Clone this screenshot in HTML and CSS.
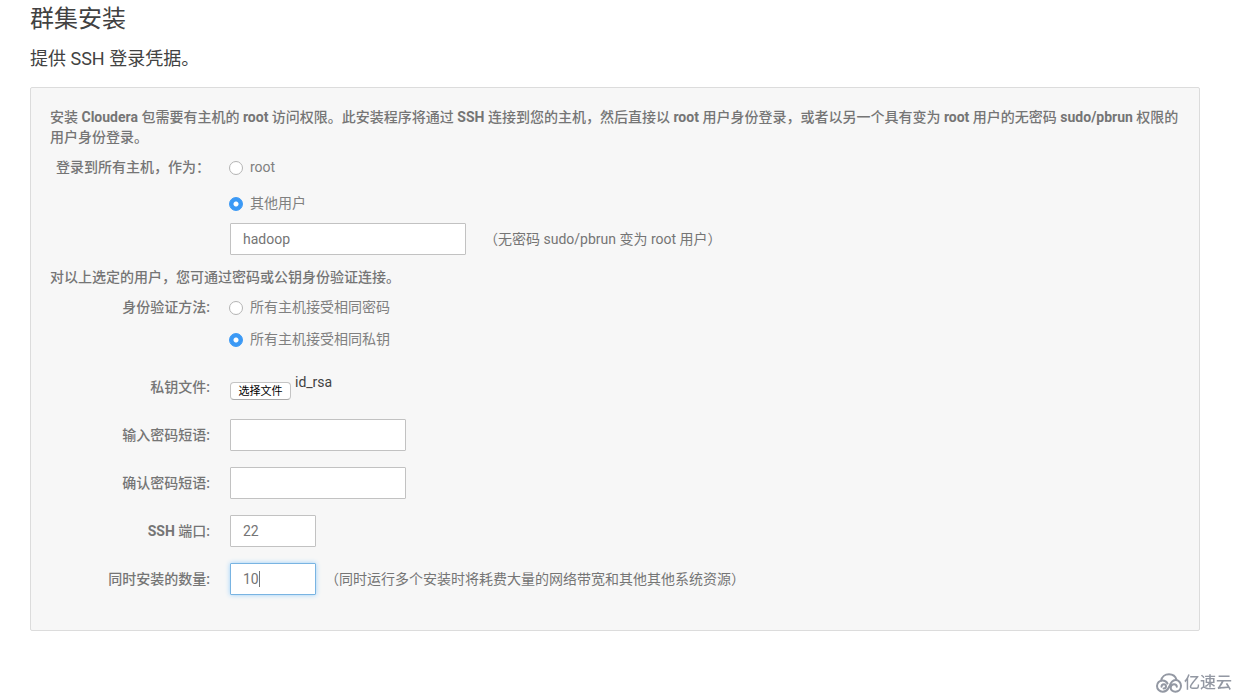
FILE: index.html
```html
<!DOCTYPE html>
<html lang="zh-CN">
<head>
<meta charset="utf-8">
<title>群集安装</title>
<link rel="stylesheet" href="styles.css">
</head>
<body>
<main class="page">
  <h1 class="title">群集安装</h1>
  <h2 class="subtitle">提供 SSH 登录凭据。</h2>
  <form class="panel">
    <p class="note">安装 <b>Cloudera</b> 包需要有主机的 <b>root</b> 访问权限。此安装程序将通过 <b>SSH</b> 连接到您的主机，然后直接以 <b>root</b> 用户身份登录，或者以另一个具有变为 <b>root</b> 用户的无密码 <b>sudo/pbrun</b> 权限的用户身份登录。</p>
    <div class="row row-choice" role="radiogroup" aria-labelledby="login-label">
      <span class="label" id="login-label">登录到所有主机，作为：</span>
      <div class="choices choices-wide">
        <label class="choice"><input class="radio" type="radio" name="login">root</label>
        <label class="choice"><input class="radio" type="radio" name="login" checked>其他用户</label>
      </div>
    </div>
    <div class="row row-user">
      <div class="field field-user">
        <input class="input input-large" type="text" value="hadoop" aria-label="其他用户">
        <span class="hint">（无密码 sudo/pbrun 变为 root 用户）</span>
      </div>
    </div>
    <p class="note">对以上选定的用户，您可通过密码或公钥身份验证连接。</p>
    <div class="row row-choice" role="radiogroup" aria-labelledby="auth-label">
      <span class="label" id="auth-label">身份验证方法:</span>
      <div class="choices">
        <label class="choice"><input class="radio" type="radio" name="auth">所有主机接受相同密码</label>
        <label class="choice"><input class="radio" type="radio" name="auth" checked>所有主机接受相同私钥</label>
      </div>
    </div>
    <div class="fields">
      <div class="row">
        <label class="label" for="key-file">私钥文件:</label>
        <div class="file"><button class="file-button" id="key-file" type="button">选择文件</button><span class="file-name">id_rsa</span></div>
      </div>
      <div class="row">
        <label class="label" for="pass">输入密码短语:</label>
        <input class="input input-medium" id="pass" type="password">
      </div>
      <div class="row">
        <label class="label" for="pass-again">确认密码短语:</label>
        <input class="input input-medium" id="pass-again" type="password">
      </div>
      <div class="row">
        <label class="label" for="port"><b>SSH</b> 端口:</label>
        <input class="input input-small" id="port" type="text" value="22">
      </div>
      <div class="row">
        <label class="label" for="count">同时安装的数量:</label>
        <div class="field field-count">
          <span class="caret-box"><input class="input input-small input-active" id="count" type="text" value="10"></span>
          <span class="hint">（同时运行多个安装时将耗费大量的网络带宽和其他其他系统资源）</span>
        </div>
      </div>
    </div>
  </form>
</main>
<div class="brand">
  <svg class="brand-icon" viewBox="0 0 26 20" aria-hidden="true">
    <path d="M5.200 7.500C5.800 3.800 9 1.200 13 1.200c3.700 0 6.500 2 7.400 5.300"/>
    <path d="M11.500 10.500C10.500 8.300 8.800 7.400 6.700 7.400 3.500 7.400 1 9.900 1 13s2.500 5.700 5.700 5.700c3.300 0 5.200-2.200 6.300-4.700 1.300-3.500 2.800-7 6.500-7 3.100 0 5.500 2.600 5.500 5.800 0 3.400-2.400 5.900-5.600 5.900-2.800 0-4.700-1.700-4.700-4 0-2 1.500-3.500 3.300-3.500 1.700 0 2.800 1.200 2.800 2.600"/>
    <path d="M5.500 13.800c0-1.500 1-2.600 2.400-2.600 1.300 0 2.100.900 2.100 2 0 1.300-1 2.200-2.400 2.200"/>
  </svg>
  <span>亿速云</span>
</div>
</body>
</html>
```
FILE: styles.css
```css
* { box-sizing: border-box; }

body {
  margin: 0;
  background: #fff;
  color: #757575;
  font: 14px/20px Roboto, "Noto Sans CJK SC", sans-serif;
}

b { font-weight: 700; }

.page { padding: 0 48px 0 30px; }

.title, .subtitle { margin: 0; color: #424242; font-weight: 400; }
.title { font-size: 24px; line-height: 38px; }
.subtitle { font-size: 18px; line-height: 42px; }

.panel {
  margin-top: 7px;
  padding: 19px 19px 35px;
  border: 1px solid #dcdcdc;
  border-radius: 2px;
  background: #f7f7f7;
}

.note { margin: 0; font-weight: 500; }

.row {
  display: grid;
  grid-template-columns: 160px 1fr;
  column-gap: 20px;
  align-items: center;
  min-height: 32px;
}
.row-choice { align-items: start; padding-top: 10px; }
.row-user { margin: 10px 0 12px; }
.row-user .field { grid-column: 2; }

.label { font-weight: 500; text-align: right; white-space: nowrap; }

.choices { display: flex; flex-direction: column; align-items: flex-start; gap: 12px; }
.choices-wide { gap: 16px; }
.choice { display: flex; align-items: center; gap: 7px; color: #808080; }

.radio {
  appearance: none;
  width: 14px;
  height: 14px;
  margin: 1px 0 0 -1px;
  border: 1px solid #b4b4b4;
  border-radius: 50%;
  background: #fff;
}
.radio:checked {
  border-color: #3b99f5;
  background: radial-gradient(circle, #fff 0 2px, #3b99f5 3px);
}

.fields { display: flex; flex-direction: column; gap: 16px; margin-top: 22px; }

.field { display: flex; align-items: center; }
.field-user { gap: 18px; }
.field-count { gap: 9px; }

.input {
  height: 32px;
  padding: 0 12px;
  border: 1px solid #c2c2c2;
  border-radius: 1px;
  background: #fff;
  color: #757575;
  font: inherit;
  outline: 0;
}
.input-large { width: 236px; }
.input-medium { width: 176px; }
.input-small { width: 86px; }
.input-active { border-color: #79b4e2; box-shadow: 0 0 5px #9bd0fa; }

.caret-box { position: relative; display: flex; }
.caret-box::after {
  content: "";
  position: absolute;
  top: 8px;
  left: 29px;
  width: 1px;
  height: 16px;
  background: #757575;
}

.file { display: flex; align-items: flex-end; gap: 4px; padding-bottom: 3px; }
.file-button {
  width: 61px;
  height: 18px;
  padding: 1px 0 0;
  border: 1px solid #c4c4c4;
  border-bottom-color: #aaa;
  border-radius: 4px;
  background: #fff;
  color: #000;
  font: 11px/16px Roboto, "Noto Sans CJK SC", sans-serif;
}
.file-name { padding-bottom: 8px; color: #424242; }

.brand {
  position: fixed;
  right: 16px;
  bottom: 2px;
  display: flex;
  align-items: center;
  gap: 2px;
  color: #9398a3;
  font-size: 16px;
  font-weight: 500;
}
.brand-icon {
  width: 26px;
  height: 20px;
  fill: none;
  stroke: #9398a3;
  stroke-width: 2;
  stroke-linecap: round;
}
```
